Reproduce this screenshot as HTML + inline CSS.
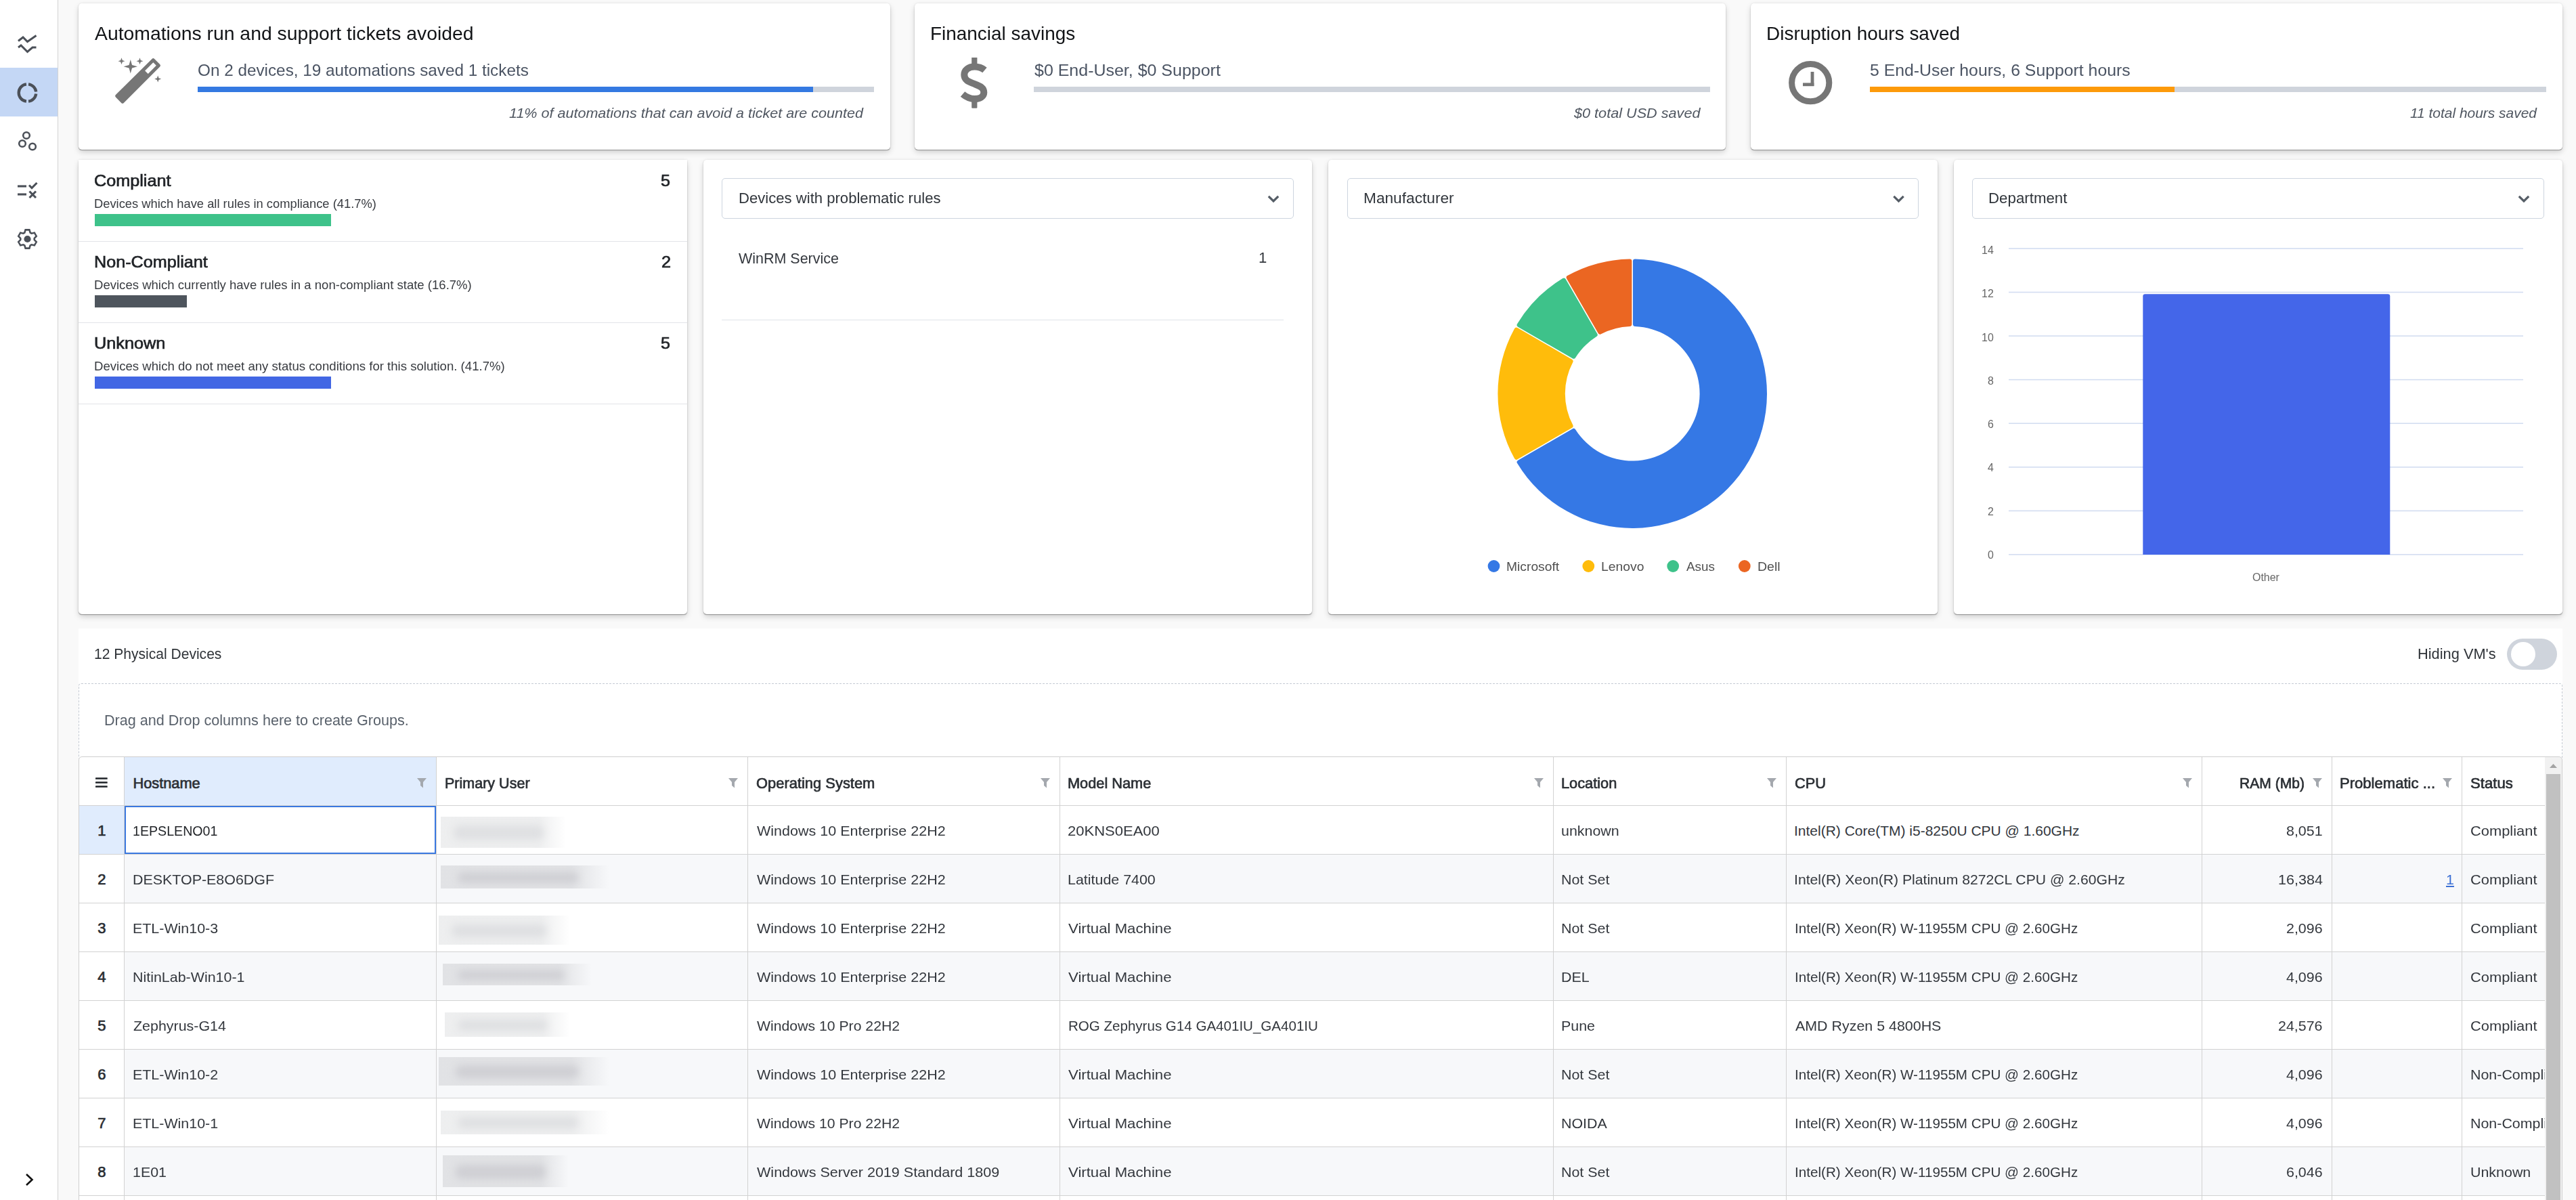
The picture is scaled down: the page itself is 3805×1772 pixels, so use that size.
<!DOCTYPE html><html><head><meta charset="utf-8"><style>
html,body{margin:0;padding:0;}
body{width:3805px;height:1772px;overflow:hidden;position:relative;background:#f9f9f9;font-family:"Liberation Sans",sans-serif;}
.t{position:absolute;line-height:1;white-space:nowrap;transform-origin:0 0;}
.r{position:absolute;}
svg{position:absolute;overflow:visible;}
</style></head><body><div class="r" style="left:0px;top:0px;width:85px;height:1772px;background:#ffffff;"></div><div class="r" style="left:85px;top:0px;width:1px;height:1772px;background:#d3d3d3;"></div><div class="r" style="left:0px;top:100px;width:85px;height:72px;background:#c4d7f5;"></div><svg style="left:0;top:0" width="86" height="1772">
<g fill="none" stroke="#4b5058" stroke-width="3" stroke-linejoin="miter">
<polyline points="27,60.5 34,55 40.5,61.5 53.5,52.5"/>
<polyline points="27,70 31,67 40.5,76.5 48,70 53.5,70"/>
</g>
<g fill="none" stroke="#4b5058" stroke-width="4.3">
<path d="M42.04,124.29 A12.8,12.8 0 0 1 53.21,135.46"/>
<path d="M53.21,138.54 A12.8,12.8 0 0 1 42.04,149.71"/>
<path d="M38.96,149.71 A12.8,12.8 0 0 1 38.96,124.29"/>
</g>
<g fill="none" stroke="#4b5058" stroke-width="2.6">
<circle cx="39" cy="200" r="4.8"/>
<circle cx="33" cy="212" r="4.8"/>
<circle cx="48" cy="216.5" r="4.8"/>
</g>
<g fill="none" stroke="#4b5058" stroke-width="3.1">
<line x1="26" y1="275" x2="39" y2="275"/>
<line x1="26" y1="287" x2="39" y2="287"/>
<polyline points="43,273.5 47,277.5 54.5,270"/>
<line x1="43.5" y1="282.5" x2="53" y2="292"/>
<line x1="53" y1="282.5" x2="43.5" y2="292"/>
</g>
<polygon points="36.31,343.59 37.61,339.40 43.39,339.40 44.69,343.59 46.55,344.67 50.83,343.70 53.72,348.70 50.74,351.92 50.74,354.08 53.72,357.30 50.83,362.30 46.55,361.33 44.69,362.41 43.39,366.60 37.61,366.60 36.31,362.41 34.45,361.33 30.17,362.30 27.28,357.30 30.26,354.08 30.26,351.92 27.28,348.70 30.17,343.70 34.45,344.67" fill="none" stroke="#4b5058" stroke-width="2.6" stroke-linejoin="miter"/><circle cx="40.5" cy="353" r="5.1" fill="#4b5058"/><polyline points="39,1734 47.5,1742 39,1750" fill="none" stroke="#111" stroke-width="2.6"/></svg><div class="r" style="left:116px;top:5px;width:1199px;height:216px;background:#fff;box-shadow:0 1.5px 1px -0.5px rgba(0,0,0,.3),0 4px 10px -1px rgba(0,0,0,.2),0 0 3px rgba(0,0,0,.09);border-radius:5px;"></div><div class="r" style="left:1351px;top:5px;width:1198px;height:216px;background:#fff;box-shadow:0 1.5px 1px -0.5px rgba(0,0,0,.3),0 4px 10px -1px rgba(0,0,0,.2),0 0 3px rgba(0,0,0,.09);border-radius:5px;"></div><div class="r" style="left:2586px;top:5px;width:1199px;height:216px;background:#fff;box-shadow:0 1.5px 1px -0.5px rgba(0,0,0,.3),0 4px 10px -1px rgba(0,0,0,.2),0 0 3px rgba(0,0,0,.09);border-radius:5px;"></div><div class="t" style="left:140.40px;top:36px;font-size:27.5px;color:#121417;transform:scaleX(1.0312);">Automations run and support tickets avoided</div><div class="t" style="left:291.50px;top:92px;font-size:24.2px;color:#4b5463;transform:scaleX(1.0043);">On 2 devices, 19 automations saved 1 tickets</div><div class="r" style="left:292px;top:128px;width:999px;height:8px;background:#cfd4dc;"></div><div class="r" style="left:292px;top:128px;width:909px;height:8px;background:#3479e1;"></div><div class="t" style="left:751.70px;top:156px;font-size:21px;color:#4f5660;font-style:italic;transform:scaleX(1.0260);">11% of automations that can avoid a ticket are counted</div><div class="t" style="left:1374.47px;top:36px;font-size:27.5px;color:#121417;transform:scaleX(1.0154);">Financial savings</div><div class="t" style="left:1527.90px;top:92px;font-size:24.2px;color:#4b5463;transform:scaleX(1.0323);">$0 End-User, $0 Support</div><div class="r" style="left:1527px;top:128px;width:999px;height:8px;background:#cfd4dc;"></div><div class="t" style="left:2325.40px;top:156px;font-size:21px;color:#4f5660;font-style:italic;transform:scaleX(1.0308);">$0 total USD saved</div><div class="t" style="left:2609.37px;top:36px;font-size:27.5px;color:#121417;transform:scaleX(1.0169);">Disruption hours saved</div><div class="t" style="left:2761.77px;top:92px;font-size:24.2px;color:#4b5463;transform:scaleX(1.0254);">5 End-User hours, 6 Support hours</div><div class="r" style="left:2762px;top:128px;width:999px;height:8px;background:#cfd4dc;"></div><div class="r" style="left:2762px;top:128px;width:450px;height:8px;background:#fd9a0a;"></div><div class="t" style="left:3559.60px;top:156px;font-size:21px;color:#4f5660;font-style:italic;transform:scaleX(0.9968);">11 total hours saved</div><svg style="left:0;top:0" width="300" height="200">
<path d="M224.5,86.9 Q226.3,85.1 228.1,86.9 L236.2,95 Q238,96.8 236.2,98.6 L182.8,151.9 Q181,153.7 179.2,151.9 L170.9,143.6 Q169.1,141.8 170.9,140 Z" fill="#767676"/>
<path d="M226.3,92.3 L230.8,96.8 L218.7,109 L214.1,104.5 Z" fill="#fff"/>
<polygon points="192.80,88.00 195.04,95.96 203.00,98.20 195.04,100.44 192.80,108.40 190.56,100.44 182.60,98.20 190.56,95.96" fill="#767676"/>
<polygon points="179.50,85.20 180.80,88.90 184.50,90.20 180.80,91.50 179.50,95.20 178.20,91.50 174.50,90.20 178.20,88.90" fill="#767676"/>
<polygon points="206.50,85.20 207.80,88.90 211.50,90.20 207.80,91.50 206.50,95.20 205.20,91.50 201.50,90.20 205.20,88.90" fill="#767676"/>
<polygon points="233.20,111.60 234.50,115.30 238.20,116.60 234.50,117.90 233.20,121.60 231.90,117.90 228.20,116.60 231.90,115.30" fill="#767676"/>
</svg><svg style="left:0;top:0" width="1500" height="200">
<rect x="1435.2" y="85" width="8.2" height="12" fill="#767676"/>
<rect x="1435.2" y="147" width="8.2" height="12.7" fill="#767676" rx="1"/>
<path d="M1454.5,103.5 C1450,99.8 1445,98.5 1439.5,98.5 C1430.5,98.5 1424.3,103.5 1424.3,110.5 C1424.3,118.5 1431,120.8 1440,124.2 C1448.5,127.4 1453.3,130 1453.3,136.5 C1453.3,142.5 1447.5,146 1439.5,146 C1432.5,146 1426.5,142.8 1422,139" fill="none" stroke="#767676" stroke-width="10"/>
</svg><svg style="left:0;top:0" width="2800" height="200">
<circle cx="2674.2" cy="122.2" r="27.6" fill="none" stroke="#767676" stroke-width="9"/>
<rect x="2674.6" y="106" width="4.8" height="21" fill="#767676"/>
<rect x="2663" y="122.4" width="16.4" height="4.8" fill="#767676"/>
</svg><div class="r" style="left:116px;top:236px;width:899px;height:671px;background:#fff;box-shadow:0 1.5px 1px -0.5px rgba(0,0,0,.3),0 4px 10px -1px rgba(0,0,0,.2),0 0 3px rgba(0,0,0,.09);border-radius:5px;border-radius:0 0 5px 5px;"></div><div class="r" style="left:1039px;top:236px;width:899px;height:671px;background:#fff;box-shadow:0 1.5px 1px -0.5px rgba(0,0,0,.3),0 4px 10px -1px rgba(0,0,0,.2),0 0 3px rgba(0,0,0,.09);border-radius:5px;"></div><div class="r" style="left:1962px;top:236px;width:900px;height:671px;background:#fff;box-shadow:0 1.5px 1px -0.5px rgba(0,0,0,.3),0 4px 10px -1px rgba(0,0,0,.2),0 0 3px rgba(0,0,0,.09);border-radius:5px;"></div><div class="r" style="left:2886px;top:236px;width:899px;height:671px;background:#fff;box-shadow:0 1.5px 1px -0.5px rgba(0,0,0,.3),0 4px 10px -1px rgba(0,0,0,.2),0 0 3px rgba(0,0,0,.09);border-radius:5px;"></div><div class="t" style="left:138.98px;top:255px;font-size:24.8px;color:#1f2226;-webkit-text-stroke:0.7px #1f2226;transform:scaleX(1.0162);">Compliant</div><div class="t" style="left:975.76px;top:255px;font-size:24.8px;color:#1f2226;-webkit-text-stroke:0.7px #1f2226;transform:scaleX(1.0169);">5</div><div class="t" style="left:138.97px;top:293px;font-size:17.8px;color:#383b40;transform:scaleX(1.0313);">Devices which have all rules in compliance (41.7%)</div><div class="r" style="left:140px;top:316.2px;width:349px;height:17.8px;background:#3ec28a;"></div><div class="r" style="left:116px;top:355.5px;width:899px;height:1px;background:#e2e4e8;"></div><div class="t" style="left:138.99px;top:375px;font-size:24.8px;color:#1f2226;-webkit-text-stroke:0.7px #1f2226;transform:scaleX(1.0145);">Non-Compliant</div><div class="t" style="left:976.78px;top:375px;font-size:24.8px;color:#1f2226;-webkit-text-stroke:0.7px #1f2226;transform:scaleX(1.0169);">2</div><div class="t" style="left:138.96px;top:413px;font-size:17.8px;color:#383b40;transform:scaleX(1.0432);">Devices which currently have rules in a non-compliant state (16.7%)</div><div class="r" style="left:140px;top:436.2px;width:136px;height:17.8px;background:#4e555d;"></div><div class="r" style="left:116px;top:475.5px;width:899px;height:1px;background:#e2e4e8;"></div><div class="t" style="left:138.98px;top:495px;font-size:24.8px;color:#1f2226;-webkit-text-stroke:0.7px #1f2226;transform:scaleX(1.0198);">Unknown</div><div class="t" style="left:975.76px;top:495px;font-size:24.8px;color:#1f2226;-webkit-text-stroke:0.7px #1f2226;transform:scaleX(1.0169);">5</div><div class="t" style="left:138.95px;top:533px;font-size:17.8px;color:#383b40;transform:scaleX(1.0458);">Devices which do not meet any status conditions for this solution. (41.7%)</div><div class="r" style="left:140px;top:556.2px;width:349px;height:17.8px;background:#4267e4;"></div><div class="r" style="left:116px;top:595.5px;width:899px;height:1px;background:#e2e4e8;"></div><div class="r" style="left:1066px;top:263px;width:844.5px;height:59.5px;background:#fff;box-sizing:border-box;border:1px solid #cdd5df;border-radius:5px;"></div><div class="t" style="left:1090.50px;top:282px;font-size:22px;color:#30353b;transform:scaleX(1.0047);">Devices with problematic rules</div><svg style="left:0;top:0" width="3805" height="400"><polyline points="1873.8,289.8 1881.0,297 1888.2,289.8" fill="none" stroke="#555d66" stroke-width="3.2"/></svg><div class="t" style="left:1090.60px;top:371px;font-size:22px;color:#33373d;transform:scaleX(0.9762);">WinRM Service</div><div class="t" style="left:1858.92px;top:370px;font-size:22px;color:#33373d;transform:scaleX(1.0063);">1</div><div class="r" style="left:1066px;top:472px;width:830px;height:1px;background:#dfe3e8;"></div><div class="r" style="left:1989.5px;top:263px;width:844.5px;height:59.5px;background:#fff;box-sizing:border-box;border:1px solid #cdd5df;border-radius:5px;"></div><div class="t" style="left:2013.97px;top:282px;font-size:22px;color:#30353b;transform:scaleX(1.0310);">Manufacturer</div><svg style="left:0;top:0" width="3805" height="400"><polyline points="2797.3,289.8 2804.5,297 2811.7,289.8" fill="none" stroke="#555d66" stroke-width="3.2"/></svg><div class="r" style="left:2912.5px;top:263px;width:845.0px;height:59.5px;background:#fff;box-sizing:border-box;border:1px solid #cdd5df;border-radius:5px;"></div><div class="t" style="left:2936.99px;top:282px;font-size:22px;color:#30353b;transform:scaleX(1.0132);">Department</div><svg style="left:0;top:0" width="3805" height="400"><polyline points="3720.8,289.8 3728.0,297 3735.2,289.8" fill="none" stroke="#555d66" stroke-width="3.2"/></svg><svg style="left:0;top:0" width="3805" height="900"><path d="M2412.00,385.64 A3.2,3.2 0 0 1 2415.27,382.44 A198.8,198.8 0 1 1 2241.10,684.10 A3.2,3.2 0 0 1 2242.24,679.67 L2322.81,633.15 A3.2,3.2 0 0 1 2327.12,634.22 A99.4,99.4 0 1 0 2415.08,481.88 A3.2,3.2 0 0 1 2412.00,478.68 Z" fill="#3578e5"/><path d="M2241.44,678.29 A3.2,3.2 0 0 1 2237.04,677.06 A198.8,198.8 0 0 1 2237.04,485.34 A3.2,3.2 0 0 1 2241.44,484.11 L2322.01,530.63 A3.2,3.2 0 0 1 2323.24,534.89 A99.4,99.4 0 0 0 2323.24,627.51 A3.2,3.2 0 0 1 2322.01,631.77 Z" fill="#ffbc0b"/><path d="M2242.24,482.73 A3.2,3.2 0 0 1 2241.10,478.30 A198.8,198.8 0 0 1 2308.30,411.10 A3.2,3.2 0 0 1 2312.73,412.24 L2359.25,492.81 A3.2,3.2 0 0 1 2358.18,497.12 A99.4,99.4 0 0 0 2327.12,528.18 A3.2,3.2 0 0 1 2322.81,529.25 Z" fill="#3ec28a"/><path d="M2314.11,411.44 A3.2,3.2 0 0 1 2315.34,407.04 A198.8,198.8 0 0 1 2407.13,382.44 A3.2,3.2 0 0 1 2410.40,385.64 L2410.40,478.68 A3.2,3.2 0 0 1 2407.32,481.88 A99.4,99.4 0 0 0 2364.89,493.24 A3.2,3.2 0 0 1 2360.63,492.01 Z" fill="#eb6622"/><circle cx="2206.5" cy="836" r="8.9" fill="#3578e5"/><circle cx="2346.3" cy="836" r="8.9" fill="#ffbc0b"/><circle cx="2471.2" cy="836" r="8.9" fill="#3ec28a"/><circle cx="2576.8" cy="836" r="8.9" fill="#eb6622"/></svg><div class="t" style="left:2225.19px;top:827px;font-size:19px;color:#505050;transform:scaleX(1.0145);">Microsoft</div><div class="t" style="left:2365.28px;top:827px;font-size:19px;color:#505050;transform:scaleX(1.0180);">Lenovo</div><div class="t" style="left:2490.80px;top:827px;font-size:19px;color:#505050;transform:scaleX(0.9929);">Asus</div><div class="t" style="left:2595.77px;top:827px;font-size:19px;color:#505050;transform:scaleX(1.0290);">Dell</div><svg style="left:0;top:0" width="3805" height="900"><rect x="2967" y="818.10" width="760" height="1.6" fill="#d3ddf1"/><rect x="2967" y="753.54" width="760" height="1.6" fill="#d3ddf1"/><rect x="2967" y="688.98" width="760" height="1.6" fill="#d3ddf1"/><rect x="2967" y="624.42" width="760" height="1.6" fill="#d3ddf1"/><rect x="2967" y="559.86" width="760" height="1.6" fill="#d3ddf1"/><rect x="2967" y="495.30" width="760" height="1.6" fill="#d3ddf1"/><rect x="2967" y="430.74" width="760" height="1.6" fill="#d3ddf1"/><rect x="2967" y="366.18" width="760" height="1.6" fill="#d3ddf1"/><path d="M3165.3,818.90 L3165.3,437.5 Q3165.3,434.2 3168.6,434.2 L3527,434.2 Q3530.3,434.2 3530.3,437.5 L3530.3,818.90 Z" fill="#4466e9"/></svg><div class="t" style="left:2935.64px;top:812px;font-size:16.6px;color:#666;transform:scaleX(0.9619);">0</div><div class="t" style="left:2935.64px;top:748px;font-size:16.6px;color:#666;transform:scaleX(0.9619);">2</div><div class="t" style="left:2935.64px;top:683px;font-size:16.6px;color:#666;transform:scaleX(0.9619);">4</div><div class="t" style="left:2935.64px;top:619px;font-size:16.6px;color:#666;transform:scaleX(0.9619);">6</div><div class="t" style="left:2935.64px;top:555px;font-size:16.6px;color:#666;transform:scaleX(0.9619);">8</div><div class="t" style="left:2926.99px;top:491px;font-size:16.6px;color:#666;transform:scaleX(0.9619);">10</div><div class="t" style="left:2926.99px;top:426px;font-size:16.6px;color:#666;transform:scaleX(0.9619);">12</div><div class="t" style="left:2926.99px;top:362px;font-size:16.6px;color:#666;transform:scaleX(0.9619);">14</div><div class="t" style="left:3327.00px;top:845px;font-size:16.6px;color:#666;transform:scaleX(0.9619);">Other</div><div class="r" style="left:116px;top:928px;width:3669px;height:844px;background:#fff;"></div><div class="t" style="left:139.22px;top:956px;font-size:21.4px;color:#2f3338;transform:scaleX(0.9842);">12 Physical Devices</div><div class="t" style="left:3571.48px;top:956px;font-size:21.4px;color:#2f3338;transform:scaleX(1.0196);">Hiding VM's</div><div class="r" style="left:3703.2px;top:943.2px;width:73.6px;height:46px;background:#cfd4dc;border-radius:23px;"></div><div class="r" style="left:3709.3px;top:948.2px;width:36px;height:36px;border-radius:50%;background:#fff;"></div><div class="r" style="left:116px;top:1009px;width:3669px;height:130px;background:transparent;box-sizing:border-box;border:1px dashed #c4cad3;border-radius:4px;"></div><div class="t" style="left:153.79px;top:1054px;font-size:21.4px;color:#59616b;transform:scaleX(1.0088);">Drag and Drop columns here to create Groups.</div><div class="r" style="left:116px;top:1117px;width:3669px;height:655px;background:#fff;border-radius:5px 5px 0 0;"></div><div class="r" style="left:184px;top:1262px;width:3575px;height:71px;background:#f7f8fa;"></div><div class="r" style="left:184px;top:1406px;width:3575px;height:71px;background:#f7f8fa;"></div><div class="r" style="left:184px;top:1550px;width:3575px;height:71px;background:#f7f8fa;"></div><div class="r" style="left:184px;top:1694px;width:3575px;height:71px;background:#f7f8fa;"></div><div class="r" style="left:184px;top:1118px;width:460px;height:71px;background:#e0ecfd;"></div><div class="r" style="left:117px;top:1190px;width:66px;height:71px;background:#e0ecfd;"></div><div class="r" style="left:183px;top:1118px;width:1px;height:654px;background:#d2d2d2;"></div><div class="r" style="left:644px;top:1118px;width:1px;height:654px;background:#d2d2d2;"></div><div class="r" style="left:1104px;top:1118px;width:1px;height:654px;background:#d2d2d2;"></div><div class="r" style="left:1565px;top:1118px;width:1px;height:654px;background:#d2d2d2;"></div><div class="r" style="left:2294px;top:1118px;width:1px;height:654px;background:#d2d2d2;"></div><div class="r" style="left:2638px;top:1118px;width:1px;height:654px;background:#d2d2d2;"></div><div class="r" style="left:3252px;top:1118px;width:1px;height:654px;background:#d2d2d2;"></div><div class="r" style="left:3444px;top:1118px;width:1px;height:654px;background:#d2d2d2;"></div><div class="r" style="left:3636px;top:1118px;width:1px;height:654px;background:#d2d2d2;"></div><div class="r" style="left:117px;top:1189px;width:3642px;height:1px;background:#d2d2d2;"></div><div class="r" style="left:117px;top:1261px;width:3642px;height:1px;background:#d2d2d2;"></div><div class="r" style="left:117px;top:1333px;width:3642px;height:1px;background:#d2d2d2;"></div><div class="r" style="left:117px;top:1405px;width:3642px;height:1px;background:#d2d2d2;"></div><div class="r" style="left:117px;top:1477px;width:3642px;height:1px;background:#d2d2d2;"></div><div class="r" style="left:117px;top:1549px;width:3642px;height:1px;background:#d2d2d2;"></div><div class="r" style="left:117px;top:1621px;width:3642px;height:1px;background:#d2d2d2;"></div><div class="r" style="left:117px;top:1693px;width:3642px;height:1px;background:#d2d2d2;"></div><div class="r" style="left:117px;top:1765px;width:3642px;height:1px;background:#d2d2d2;"></div><div class="r" style="left:184px;top:1190px;width:460px;height:71px;background:transparent;box-sizing:border-box;border:2px solid #3a78e0;"></div><div class="t" style="left:196.40px;top:1146px;font-size:21.8px;color:#2c3035;-webkit-text-stroke:0.7px #2c3035;">Hostname</div><div class="t" style="left:656.51px;top:1146px;font-size:21.8px;color:#2c3035;-webkit-text-stroke:0.7px #2c3035;transform:scaleX(0.9874);">Primary User</div><div class="t" style="left:1117.40px;top:1146px;font-size:21.8px;color:#2c3035;-webkit-text-stroke:0.7px #2c3035;transform:scaleX(1.0052);">Operating System</div><div class="t" style="left:1577.20px;top:1146px;font-size:21.8px;color:#2c3035;-webkit-text-stroke:0.7px #2c3035;transform:scaleX(0.9979);">Model Name</div><div class="t" style="left:2306.20px;top:1146px;font-size:21.8px;color:#2c3035;-webkit-text-stroke:0.7px #2c3035;transform:scaleX(0.9979);">Location</div><div class="t" style="left:2651.40px;top:1146px;font-size:21.8px;color:#2c3035;-webkit-text-stroke:0.7px #2c3035;transform:scaleX(0.9979);">CPU</div><div class="t" style="left:3456.29px;top:1146px;font-size:21.8px;color:#2c3035;-webkit-text-stroke:0.7px #2c3035;transform:scaleX(1.0124);">Problematic ...</div><div class="t" style="left:3308.33px;top:1146px;font-size:21.8px;color:#2c3035;-webkit-text-stroke:0.7px #2c3035;transform:scaleX(0.9663);">RAM (Mb)</div><div class="r" style="left:3637px;top:1118px;width:122px;height:654px;overflow:hidden;"><div class="t" style="left:12.30px;top:28px;font-size:21.8px;color:#2c3035;-webkit-text-stroke:0.7px #2c3035;transform:scaleX(1.0161);">Status</div><div class="t" style="left:11.76px;top:98px;font-size:21px;color:#33373d;transform:scaleX(1.0415);">Compliant</div><div class="t" style="left:11.76px;top:170px;font-size:21px;color:#33373d;transform:scaleX(1.0415);">Compliant</div><div class="t" style="left:11.76px;top:242px;font-size:21px;color:#33373d;transform:scaleX(1.0415);">Compliant</div><div class="t" style="left:11.76px;top:314px;font-size:21px;color:#33373d;transform:scaleX(1.0415);">Compliant</div><div class="t" style="left:11.76px;top:386px;font-size:21px;color:#33373d;transform:scaleX(1.0415);">Compliant</div><div class="t" style="left:11.78px;top:458px;font-size:21px;color:#33373d;transform:scaleX(1.0196);">Non-Compliant</div><div class="t" style="left:11.78px;top:530px;font-size:21px;color:#33373d;transform:scaleX(1.0196);">Non-Compliant</div><div class="t" style="left:11.78px;top:602px;font-size:21px;color:#33373d;transform:scaleX(1.0196);">Unknown</div></div><svg style="left:0;top:0" width="3805" height="1200"><rect x="141" y="1148.2" width="17.7" height="2.6" rx="0.6" fill="#1e2227"/><rect x="141" y="1154.2" width="17.7" height="2.6" rx="0.6" fill="#1e2227"/><rect x="141" y="1160.2" width="17.7" height="2.6" rx="0.6" fill="#1e2227"/><path d="M616,1149 L630,1149 L625,1155 L625,1163.5 L621,1160 L621,1155 Z" fill="#a4a8ae"/><path d="M1076,1149 L1090,1149 L1085,1155 L1085,1163.5 L1081,1160 L1081,1155 Z" fill="#a4a8ae"/><path d="M1537,1149 L1551,1149 L1546,1155 L1546,1163.5 L1542,1160 L1542,1155 Z" fill="#a4a8ae"/><path d="M2266,1149 L2280,1149 L2275,1155 L2275,1163.5 L2271,1160 L2271,1155 Z" fill="#a4a8ae"/><path d="M2610,1149 L2624,1149 L2619,1155 L2619,1163.5 L2615,1160 L2615,1155 Z" fill="#a4a8ae"/><path d="M3224,1149 L3238,1149 L3233,1155 L3233,1163.5 L3229,1160 L3229,1155 Z" fill="#a4a8ae"/><path d="M3416,1149 L3430,1149 L3425,1155 L3425,1163.5 L3421,1160 L3421,1155 Z" fill="#a4a8ae"/><path d="M3608,1149 L3622,1149 L3617,1155 L3617,1163.5 L3613,1160 L3613,1155 Z" fill="#a4a8ae"/></svg><div class="t" style="left:144.30px;top:1216px;font-size:22px;color:#2a2e33;-webkit-text-stroke:0.7px #2a2e33;">1</div><div class="t" style="left:196.07px;top:1216px;font-size:21px;color:#1f2226;transform:scaleX(0.9338);">1EPSLENO01</div><div class="t" style="left:1118.00px;top:1216px;font-size:21px;color:#33373d;transform:scaleX(1.0247);">Windows 10 Enterprise 22H2</div><div class="t" style="left:1577.45px;top:1216px;font-size:21px;color:#33373d;transform:scaleX(1.0484);">20KNS0EA00</div><div class="t" style="left:2306.48px;top:1216px;font-size:21px;color:#33373d;transform:scaleX(1.0196);">unknown</div><div class="t" style="left:2650.00px;top:1216px;font-size:21px;color:#33373d;">Intel(R) Core(TM) i5-8250U CPU @ 1.60GHz</div><div class="t" style="left:3377.48px;top:1216px;font-size:21px;color:#33373d;transform:scaleX(1.0196);">8,051</div><div class="r" style="left:651px;top:1205.7px;width:185px;height:46px;overflow:hidden;background:linear-gradient(90deg,rgba(232,233,234,.75) 0%,rgba(232,233,234,.75) 78%,rgba(232,233,234,0) 100%);"><div class="r" style="left:18.5px;top:13.8px;width:133.2px;height:20.7px;background:rgba(219,220,222,.8);filter:blur(6px);border-radius:8px;"></div></div><div class="t" style="left:144.30px;top:1288px;font-size:22px;color:#2a2e33;-webkit-text-stroke:0.7px #2a2e33;">2</div><div class="t" style="left:195.98px;top:1288px;font-size:21px;color:#33373d;transform:scaleX(1.0196);">DESKTOP-E8O6DGF</div><div class="t" style="left:1118.00px;top:1288px;font-size:21px;color:#33373d;transform:scaleX(1.0247);">Windows 10 Enterprise 22H2</div><div class="t" style="left:1577.48px;top:1288px;font-size:21px;color:#33373d;transform:scaleX(1.0196);">Latitude 7400</div><div class="t" style="left:2306.48px;top:1288px;font-size:21px;color:#33373d;transform:scaleX(1.0196);">Not Set</div><div class="t" style="left:2650.48px;top:1288px;font-size:21px;color:#33373d;transform:scaleX(1.0077);">Intel(R) Xeon(R) Platinum 8272CL CPU @ 2.60GHz</div><div class="t" style="left:3365.17px;top:1288px;font-size:21px;color:#33373d;transform:scaleX(1.0254);">16,384</div><div class="t" style="left:3612.78px;top:1288px;font-size:21px;color:#3b6fd4;transform:scaleX(1.0196);text-decoration:underline;">1</div><div class="r" style="left:651px;top:1278.2px;width:249px;height:34px;overflow:hidden;background:linear-gradient(90deg,rgba(218,219,222,.75) 0%,rgba(218,219,222,.75) 78%,rgba(218,219,222,0) 100%);"><div class="r" style="left:24.9px;top:10.2px;width:179.3px;height:15.3px;background:rgba(202,203,207,.8);filter:blur(6px);border-radius:8px;"></div></div><div class="t" style="left:144.30px;top:1360px;font-size:22px;color:#2a2e33;-webkit-text-stroke:0.7px #2a2e33;">3</div><div class="t" style="left:195.98px;top:1360px;font-size:21px;color:#33373d;transform:scaleX(1.0196);">ETL-Win10-3</div><div class="t" style="left:1118.00px;top:1360px;font-size:21px;color:#33373d;transform:scaleX(1.0247);">Windows 10 Enterprise 22H2</div><div class="t" style="left:1578.30px;top:1360px;font-size:21px;color:#33373d;transform:scaleX(1.0563);">Virtual Machine</div><div class="t" style="left:2306.48px;top:1360px;font-size:21px;color:#33373d;transform:scaleX(1.0196);">Not Set</div><div class="t" style="left:2650.53px;top:1360px;font-size:21px;color:#33373d;transform:scaleX(0.9830);">Intel(R) Xeon(R) W-11955M CPU @ 2.60GHz</div><div class="t" style="left:3377.48px;top:1360px;font-size:21px;color:#33373d;transform:scaleX(1.0196);">2,096</div><div class="r" style="left:648px;top:1352px;width:194px;height:43px;overflow:hidden;background:linear-gradient(90deg,rgba(232,233,234,.75) 0%,rgba(232,233,234,.75) 78%,rgba(232,233,234,0) 100%);"><div class="r" style="left:19.4px;top:12.9px;width:139.7px;height:19.4px;background:rgba(219,220,222,.8);filter:blur(6px);border-radius:8px;"></div></div><div class="t" style="left:144.30px;top:1432px;font-size:22px;color:#2a2e33;-webkit-text-stroke:0.7px #2a2e33;">4</div><div class="t" style="left:195.98px;top:1432px;font-size:21px;color:#33373d;transform:scaleX(1.0196);">NitinLab-Win10-1</div><div class="t" style="left:1118.00px;top:1432px;font-size:21px;color:#33373d;transform:scaleX(1.0247);">Windows 10 Enterprise 22H2</div><div class="t" style="left:1578.30px;top:1432px;font-size:21px;color:#33373d;transform:scaleX(1.0563);">Virtual Machine</div><div class="t" style="left:2306.48px;top:1432px;font-size:21px;color:#33373d;transform:scaleX(1.0196);">DEL</div><div class="t" style="left:2650.53px;top:1432px;font-size:21px;color:#33373d;transform:scaleX(0.9830);">Intel(R) Xeon(R) W-11955M CPU @ 2.60GHz</div><div class="t" style="left:3377.48px;top:1432px;font-size:21px;color:#33373d;transform:scaleX(1.0196);">4,096</div><div class="r" style="left:654px;top:1422.8px;width:220px;height:32.5px;overflow:hidden;background:linear-gradient(90deg,rgba(218,219,222,.75) 0%,rgba(218,219,222,.75) 78%,rgba(218,219,222,0) 100%);"><div class="r" style="left:22.0px;top:9.8px;width:158.4px;height:14.6px;background:rgba(202,203,207,.8);filter:blur(6px);border-radius:8px;"></div></div><div class="t" style="left:144.30px;top:1504px;font-size:22px;color:#2a2e33;-webkit-text-stroke:0.7px #2a2e33;">5</div><div class="t" style="left:197.00px;top:1504px;font-size:21px;color:#33373d;transform:scaleX(1.0196);">Zephyrus-G14</div><div class="t" style="left:1118.00px;top:1504px;font-size:21px;color:#33373d;transform:scaleX(1.0101);">Windows 10 Pro 22H2</div><div class="t" style="left:1577.72px;top:1504px;font-size:21px;color:#33373d;transform:scaleX(0.9784);">ROG Zephyrus G14 GA401IU_GA401IU</div><div class="t" style="left:2306.48px;top:1504px;font-size:21px;color:#33373d;transform:scaleX(1.0196);">Pune</div><div class="t" style="left:2652.00px;top:1504px;font-size:21px;color:#33373d;transform:scaleX(1.0196);">AMD Ryzen 5 4800HS</div><div class="t" style="left:3365.25px;top:1504px;font-size:21px;color:#33373d;transform:scaleX(1.0196);">24,576</div><div class="r" style="left:657px;top:1495px;width:185px;height:36px;overflow:hidden;background:linear-gradient(90deg,rgba(232,233,234,.75) 0%,rgba(232,233,234,.75) 78%,rgba(232,233,234,0) 100%);"><div class="r" style="left:18.5px;top:10.8px;width:133.2px;height:16.2px;background:rgba(219,220,222,.8);filter:blur(6px);border-radius:8px;"></div></div><div class="t" style="left:144.30px;top:1576px;font-size:22px;color:#2a2e33;-webkit-text-stroke:0.7px #2a2e33;">6</div><div class="t" style="left:195.98px;top:1576px;font-size:21px;color:#33373d;transform:scaleX(1.0196);">ETL-Win10-2</div><div class="t" style="left:1118.00px;top:1576px;font-size:21px;color:#33373d;transform:scaleX(1.0247);">Windows 10 Enterprise 22H2</div><div class="t" style="left:1578.30px;top:1576px;font-size:21px;color:#33373d;transform:scaleX(1.0563);">Virtual Machine</div><div class="t" style="left:2306.48px;top:1576px;font-size:21px;color:#33373d;transform:scaleX(1.0196);">Not Set</div><div class="t" style="left:2650.53px;top:1576px;font-size:21px;color:#33373d;transform:scaleX(0.9830);">Intel(R) Xeon(R) W-11955M CPU @ 2.60GHz</div><div class="t" style="left:3377.48px;top:1576px;font-size:21px;color:#33373d;transform:scaleX(1.0196);">4,096</div><div class="r" style="left:648px;top:1560.5px;width:252px;height:42px;overflow:hidden;background:linear-gradient(90deg,rgba(218,219,222,.75) 0%,rgba(218,219,222,.75) 78%,rgba(218,219,222,0) 100%);"><div class="r" style="left:25.2px;top:12.6px;width:181.4px;height:18.9px;background:rgba(202,203,207,.8);filter:blur(6px);border-radius:8px;"></div></div><div class="t" style="left:144.30px;top:1648px;font-size:22px;color:#2a2e33;-webkit-text-stroke:0.7px #2a2e33;">7</div><div class="t" style="left:195.98px;top:1648px;font-size:21px;color:#33373d;transform:scaleX(1.0196);">ETL-Win10-1</div><div class="t" style="left:1118.00px;top:1648px;font-size:21px;color:#33373d;transform:scaleX(1.0101);">Windows 10 Pro 22H2</div><div class="t" style="left:1578.30px;top:1648px;font-size:21px;color:#33373d;transform:scaleX(1.0563);">Virtual Machine</div><div class="t" style="left:2306.48px;top:1648px;font-size:21px;color:#33373d;transform:scaleX(1.0196);">NOIDA</div><div class="t" style="left:2650.53px;top:1648px;font-size:21px;color:#33373d;transform:scaleX(0.9830);">Intel(R) Xeon(R) W-11955M CPU @ 2.60GHz</div><div class="t" style="left:3377.48px;top:1648px;font-size:21px;color:#33373d;transform:scaleX(1.0196);">4,096</div><div class="r" style="left:651px;top:1639.5px;width:249px;height:35.5px;overflow:hidden;background:linear-gradient(90deg,rgba(232,233,234,.75) 0%,rgba(232,233,234,.75) 78%,rgba(232,233,234,0) 100%);"><div class="r" style="left:24.9px;top:10.7px;width:179.3px;height:16.0px;background:rgba(219,220,222,.8);filter:blur(6px);border-radius:8px;"></div></div><div class="t" style="left:144.30px;top:1720px;font-size:22px;color:#2a2e33;-webkit-text-stroke:0.7px #2a2e33;">8</div><div class="t" style="left:195.98px;top:1720px;font-size:21px;color:#33373d;transform:scaleX(1.0196);">1E01</div><div class="t" style="left:1118.00px;top:1720px;font-size:21px;color:#33373d;transform:scaleX(1.0264);">Windows Server 2019 Standard 1809</div><div class="t" style="left:1578.30px;top:1720px;font-size:21px;color:#33373d;transform:scaleX(1.0563);">Virtual Machine</div><div class="t" style="left:2306.48px;top:1720px;font-size:21px;color:#33373d;transform:scaleX(1.0196);">Not Set</div><div class="t" style="left:2650.53px;top:1720px;font-size:21px;color:#33373d;transform:scaleX(0.9830);">Intel(R) Xeon(R) W-11955M CPU @ 2.60GHz</div><div class="t" style="left:3377.48px;top:1720px;font-size:21px;color:#33373d;transform:scaleX(1.0196);">6,046</div><div class="r" style="left:654px;top:1706px;width:186px;height:46.5px;overflow:hidden;background:linear-gradient(90deg,rgba(218,219,222,.75) 0%,rgba(218,219,222,.75) 78%,rgba(218,219,222,0) 100%);"><div class="r" style="left:18.6px;top:13.9px;width:133.9px;height:20.9px;background:rgba(202,203,207,.8);filter:blur(6px);border-radius:8px;"></div></div><div class="r" style="left:3759px;top:1118px;width:25px;height:654px;background:#f1f1f1;border-top-right-radius:4px;"></div><svg style="left:0;top:0" width="3805" height="1200"><path d="M3766,1134 L3771.5,1128 L3777,1134 Z" fill="#a3a3a3"/></svg><div class="r" style="left:3761px;top:1143px;width:21px;height:629px;background:#c1c1c1;"></div><div class="r" style="left:116px;top:1117px;width:3669px;height:665px;background:transparent;box-sizing:border-box;border:1px solid #cfcfcf;border-radius:5px 5px 0 0;"></div></body></html>
